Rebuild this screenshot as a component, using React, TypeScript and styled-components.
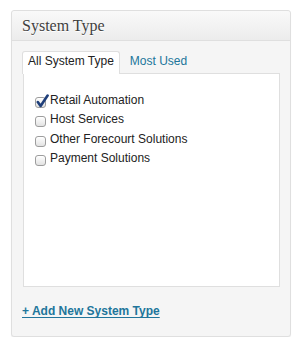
import React from "react";
import styled, { createGlobalStyle } from "styled-components";

const Global = createGlobalStyle`
  html, body { margin: 0; padding: 0; background: #ffffff; }
  body { font-family: "Liberation Sans", Arial, sans-serif; }
`;

const Postbox = styled.div`
  margin: 10px 0 0 11px;
  width: 280px;
  height: 327px;
  box-sizing: border-box;
  border: 1px solid #dfdfdf;
  border-radius: 3px;
  background: #f5f5f5;
  box-shadow: 0 1px 1px rgba(0, 0, 0, 0.06);
  display: flex;
  flex-direction: column;
`;

const Header = styled.h3`
  margin: 0;
  height: 30px;
  box-sizing: border-box;
  padding: 0 10px;
  border-bottom: 1px solid #dfdfdf;
  border-radius: 3px 3px 0 0;
  background: linear-gradient(to bottom, #f9f9f9, #ececec);
  font-family: "Liberation Serif", Georgia, serif;
  font-weight: normal;
  font-size: 16px;
  line-height: 29px;
  color: #3f3f3f;
  text-shadow: 0 1px 0 #fff;
`;

const Body = styled.div`
  padding: 10px 10px 0 10px;
  display: flex;
  flex-direction: column;
`;

const TabList = styled.div`
  display: flex;
  align-items: flex-end;
  gap: 4px;
  margin-bottom: -1px;
  position: relative;
  z-index: 1;
`;

const Tab = styled.span<{ $active?: boolean }>`
  display: block;
  padding: 1px 5px 5px;
  line-height: 16px;
  font-size: 12px;
  border: 1px solid ${(p) => (p.$active ? "#dfdfdf" : "transparent")};
  border-bottom: none;
  border-radius: 3px 3px 0 0;
  background: ${(p) => (p.$active ? "#ffffff" : "transparent")};
  color: ${(p) => (p.$active ? "#222222" : "#21759b")};
`;

const TabPanel = styled.div`
  height: 214px;
  box-sizing: border-box;
  margin-left: 1px;
  border: 1px solid #dfdfdf;
  background: #ffffff;
  padding: 17px 11px 0;
`;

const List = styled.ul`
  list-style: none;
  margin: 0;
  padding: 0;
`;

const Item = styled.li`
  display: flex;
  align-items: flex-start;
  height: 19.3px;
  line-height: 19.3px;
  font-size: 12px;
  color: #222222;
`;

const Box = styled.span`
  position: relative;
  flex: none;
  width: 11px;
  height: 11px;
  margin: 6px 4px 0 0;
  box-sizing: border-box;
  border: 1px solid #9d9d9d;
  border-radius: 3px;
  background: linear-gradient(to bottom, #ffffff, #e2e2e2);
  box-shadow: inset 0 1px 0 #fff;
`;

const Check = styled.svg`
  position: absolute;
  left: 0px;
  top: -4px;
  width: 13px;
  height: 14px;
`;

const AddLink = styled.a`
  margin-top: 16px;
  font-size: 12px;
  font-weight: bold;
  line-height: 16px;
  color: #21759b;
  text-decoration: underline;
  text-underline-offset: 2px;
`;

const items = [
  { label: "Retail Automation", checked: true },
  { label: "Host Services", checked: false },
  { label: "Other Forecourt Solutions", checked: false },
  { label: "Payment Solutions", checked: false },
];

export default function App() {
  return (
    <>
      <Global />
      <Postbox>
        <Header>System Type</Header>
        <Body>
          <TabList>
            <Tab $active>All System Type</Tab>
            <Tab>Most Used</Tab>
          </TabList>
          <TabPanel>
            <List>
              {items.map((it) => (
                <Item key={it.label}>
                  <Box>
                    {it.checked && (
                      <Check viewBox="0 0 13 14">
                        <path
                          d="M1.8 8 L4.6 12 L11.6 1.6"
                          fill="none"
                          stroke="#1f3f7a"
                          strokeWidth="2.6"
                          strokeLinecap="round"
                          strokeLinejoin="round"
                        />
                      </Check>
                    )}
                  </Box>
                  {it.label}
                </Item>
              ))}
            </List>
          </TabPanel>
          <AddLink href="#">+ Add New System Type</AddLink>
        </Body>
      </Postbox>
    </>
  );
}
